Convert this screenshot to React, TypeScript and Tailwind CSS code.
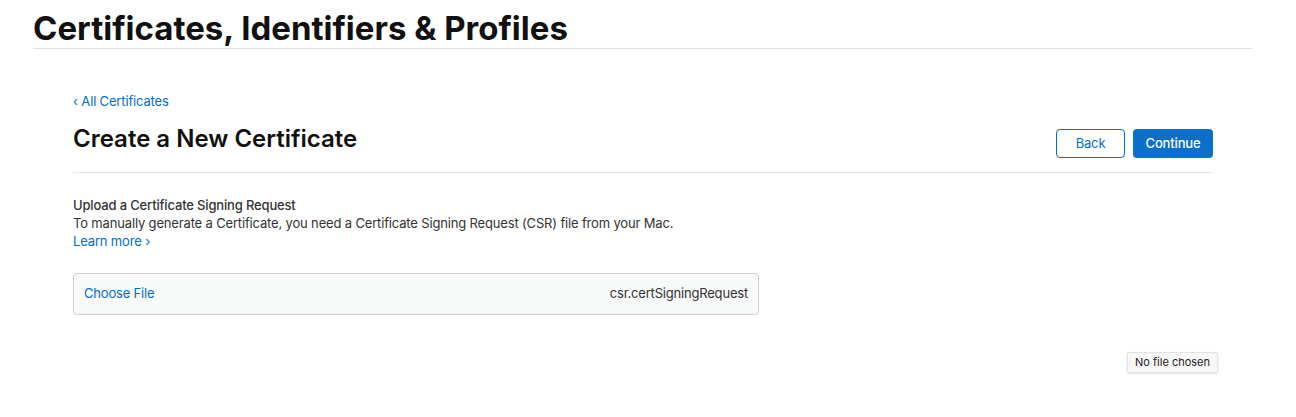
export default function App() {
  return (
    <div
      className="relative h-[417px] w-[1296px] overflow-hidden bg-white text-[#333]"
      style={{ fontFamily: 'Inter, "Noto Sans", sans-serif' }}
    >
      {/* Page header */}
      <header className="ml-[33px] w-[1219px] border-b border-[#e0e0e0] pt-[10px] pb-[2px]">
        <h1 className="text-[33px] font-bold leading-[36px] text-[#111]">
          Certificates, Identifiers &amp; Profiles
        </h1>
      </header>

      <main className="mx-[73px] w-[1140px] pt-[44px] tracking-[-0.01em]">
        <a className="block text-[13px] leading-[16px] text-[#0070c9]">
          &lsaquo; All Certificates
        </a>

        <div className="mt-[16px] flex items-start justify-between border-b border-[#e5e5e5] pb-[14px]">
          <h2 className="text-[24px] font-semibold leading-[28px] tracking-normal text-[#111]">
            Create a New Certificate
          </h2>
          <div className="mt-[4px] flex gap-2">
            <button className="h-[29px] w-[69px] rounded-[4px] border border-[#0070c9] text-[13px] text-[#0070c9]">
              Back
            </button>
            <button className="h-[29px] w-[80px] rounded-[4px] bg-[#0a70c9] text-[13px] font-medium text-white">
              Continue
            </button>
          </div>
        </div>

        <section className="mt-[23px] text-[13px] leading-[18px]">
          <p className="font-medium text-[#333]">Upload a Certificate Signing Request</p>
          <p className="text-[#333]">
            To manually generate a Certificate, you need a Certificate Signing Request (CSR) file from
            your Mac.
          </p>
          <a className="block text-[#0070c9]">Learn more &rsaquo;</a>
        </section>

        <div className="mt-[23px] flex h-[42px] w-[686px] items-center justify-between rounded-[4px] border border-[#cfcfcf] bg-[#f8f9f9] px-[10px] text-[13px] tracking-[-0.015em]">
          <span className="text-[#0070c9]">Choose File</span>
          <span className="text-[#333]">csr.certSigningRequest</span>
        </div>
      </main>

      {/* Tooltip */}
      <div className="absolute left-[1127px] top-[352px] rounded-[2px] border border-[#e2e2e2] bg-[#f7f7f7] px-[7px] py-[2px] text-[11px] leading-[15px] text-[#222] shadow-sm">
        No file chosen
      </div>
    </div>
  );
}
